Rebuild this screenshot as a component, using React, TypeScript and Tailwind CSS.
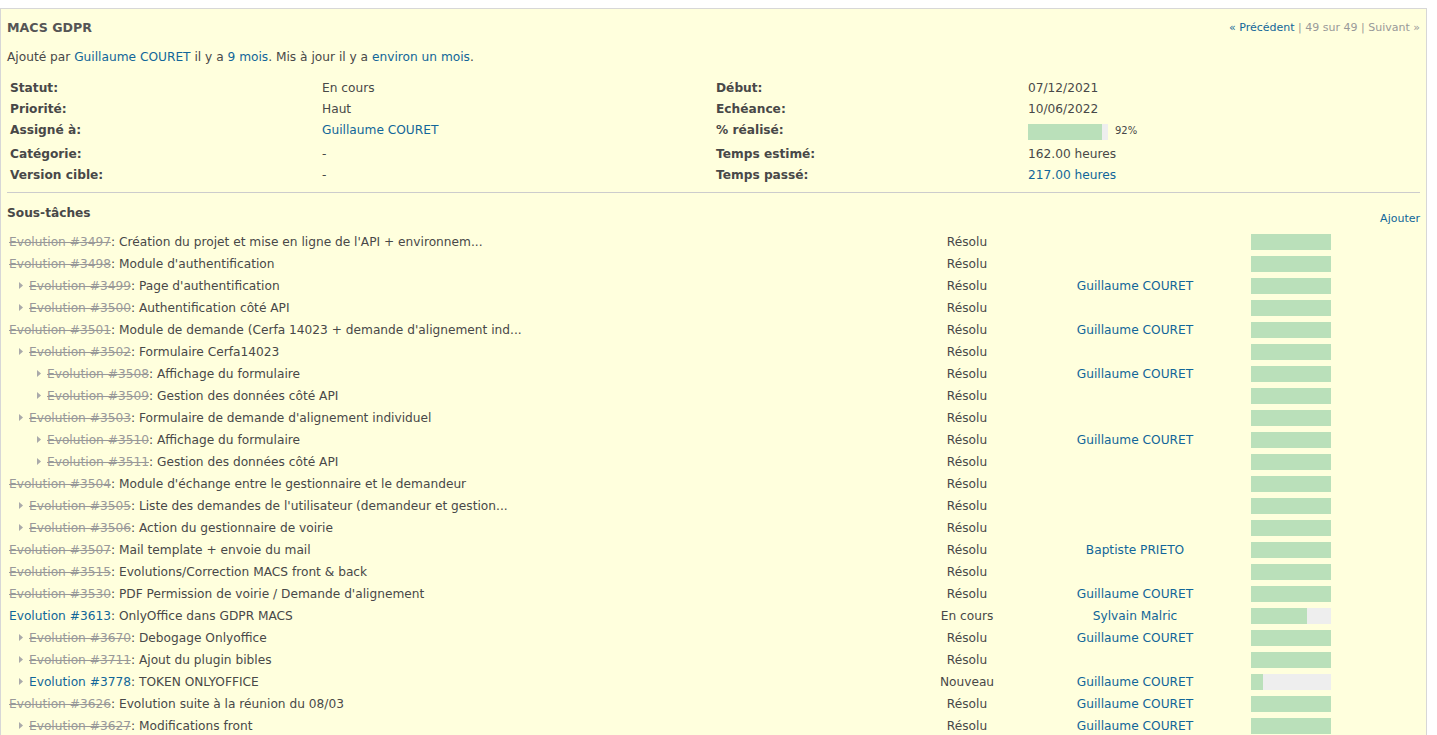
import React from "react";

type Row = {
  level: number;
  id: number;
  title: string;
  closed: boolean;
  status: string;
  assignee?: string;
  done: number;
};

const rows: Row[] = [
  { level: 0, id: 3497, title: "Création du projet et mise en ligne de l'API + environnem...", closed: true, status: "Résolu", done: 100 },
  { level: 0, id: 3498, title: "Module d'authentification", closed: true, status: "Résolu", done: 100 },
  { level: 1, id: 3499, title: "Page d'authentification", closed: true, status: "Résolu", assignee: "Guillaume COURET", done: 100 },
  { level: 1, id: 3500, title: "Authentification côté API", closed: true, status: "Résolu", done: 100 },
  { level: 0, id: 3501, title: "Module de demande (Cerfa 14023 + demande d'alignement ind...", closed: true, status: "Résolu", assignee: "Guillaume COURET", done: 100 },
  { level: 1, id: 3502, title: "Formulaire Cerfa14023", closed: true, status: "Résolu", done: 100 },
  { level: 2, id: 3508, title: "Affichage du formulaire", closed: true, status: "Résolu", assignee: "Guillaume COURET", done: 100 },
  { level: 2, id: 3509, title: "Gestion des données côté API", closed: true, status: "Résolu", done: 100 },
  { level: 1, id: 3503, title: "Formulaire de demande d'alignement individuel", closed: true, status: "Résolu", done: 100 },
  { level: 2, id: 3510, title: "Affichage du formulaire", closed: true, status: "Résolu", assignee: "Guillaume COURET", done: 100 },
  { level: 2, id: 3511, title: "Gestion des données côté API", closed: true, status: "Résolu", done: 100 },
  { level: 0, id: 3504, title: "Module d'échange entre le gestionnaire et le demandeur", closed: true, status: "Résolu", done: 100 },
  { level: 1, id: 3505, title: "Liste des demandes de l'utilisateur (demandeur et gestion...", closed: true, status: "Résolu", done: 100 },
  { level: 1, id: 3506, title: "Action du gestionnaire de voirie", closed: true, status: "Résolu", done: 100 },
  { level: 0, id: 3507, title: "Mail template + envoie du mail", closed: true, status: "Résolu", assignee: "Baptiste PRIETO", done: 100 },
  { level: 0, id: 3515, title: "Evolutions/Correction MACS front & back", closed: true, status: "Résolu", done: 100 },
  { level: 0, id: 3530, title: "PDF Permission de voirie / Demande d'alignement", closed: true, status: "Résolu", assignee: "Guillaume COURET", done: 100 },
  { level: 0, id: 3613, title: "OnlyOffice dans GDPR MACS", closed: false, status: "En cours", assignee: "Sylvain Malric", done: 70 },
  { level: 1, id: 3670, title: "Debogage Onlyoffice", closed: true, status: "Résolu", assignee: "Guillaume COURET", done: 100 },
  { level: 1, id: 3711, title: "Ajout du plugin bibles", closed: true, status: "Résolu", done: 100 },
  { level: 1, id: 3778, title: "TOKEN ONLYOFFICE", closed: false, status: "Nouveau", assignee: "Guillaume COURET", done: 15 },
  { level: 0, id: 3626, title: "Evolution suite à la réunion du 08/03", closed: true, status: "Résolu", assignee: "Guillaume COURET", done: 100 },
  { level: 1, id: 3627, title: "Modifications front", closed: true, status: "Résolu", assignee: "Guillaume COURET", done: 100 },
];

function Arrow() {
  return (
    <svg width="4" height="7" viewBox="0 0 4 7" className="mr-[6px] shrink-0">
      <path d="M0 0 L4 3.5 L0 7 Z" fill="#aaaaaa" />
    </svg>
  );
}

function Bar({ pct }: { pct: number }) {
  return (
    <div className="flex h-4 w-20 bg-[#eeeeee]">
      <div className="h-4 bg-[#bae0ba]" style={{ width: `${pct}%` }} />
    </div>
  );
}

export default function App() {
  return (
    <div className="min-h-screen bg-white pt-2 text-[12.2px] text-[#484848] font-['DejaVu_Sans','Verdana',sans-serif]">
      <div className="w-[1427px] border border-[#d7d7d7] bg-[#ffffdd] px-[6px] pt-[10px]">
        <div className="flex items-start justify-between">
          <h3 className="text-[12.6px] font-bold leading-[18px] text-[#555555]">MACS GDPR</h3>
          <div className="mt-[1px] text-[11px] leading-[16px] text-[#999999]">
            <span className="text-[#116699]">« Précédent</span> | 49 sur 49 | Suivant »
          </div>
        </div>
        <p className="mt-[12px] leading-[16px]">
          Ajouté par <span className="text-[#116699]">Guillaume COURET</span> il y a{" "}
          <span className="text-[#116699]">9 mois</span>. Mis à jour il y a{" "}
          <span className="text-[#116699]">environ un mois</span>.
        </p>

        <div className="mt-[13px] grid grid-cols-[312px_394px_312px_1fr] pl-[3px] leading-[16px]">
          <div className="h-[21px] pt-[2px] font-bold">Statut:</div>
          <div className="h-[21px] pt-[2px]">En cours</div>
          <div className="h-[21px] pt-[2px] font-bold">Début:</div>
          <div className="h-[21px] pt-[2px]">07/12/2021</div>

          <div className="h-[21px] pt-[2px] font-bold">Priorité:</div>
          <div className="h-[21px] pt-[2px]">Haut</div>
          <div className="h-[21px] pt-[2px] font-bold">Echéance:</div>
          <div className="h-[21px] pt-[2px]">10/06/2022</div>

          <div className="h-[24px] pt-[2px] font-bold">Assigné à:</div>
          <div className="h-[24px] pt-[2px] text-[#116699]">Guillaume COURET</div>
          <div className="h-[24px] pt-[2px] font-bold">% réalisé:</div>
          <div className="flex h-[24px] items-start gap-[7px] pt-[4px]">
            <Bar pct={92} />
            <span className="text-[10px] leading-[14px]">92%</span>
          </div>

          <div className="h-[21px] pt-[2px] font-bold">Catégorie:</div>
          <div className="h-[21px] pt-[2px]">-</div>
          <div className="h-[21px] pt-[2px] font-bold">Temps estimé:</div>
          <div className="h-[21px] pt-[2px]">162.00 heures</div>

          <div className="h-[21px] pt-[2px] font-bold">Version cible:</div>
          <div className="h-[21px] pt-[2px]">-</div>
          <div className="h-[21px] pt-[2px] font-bold">Temps passé:</div>
          <div className="h-[21px] pt-[2px] text-[#116699]">217.00 heures</div>
        </div>

        <hr className="mt-[6px] border-0 border-t border-[#cccccc]" />

        <div className="mt-[12px] flex items-start justify-between">
          <div className="font-bold leading-[16px]">Sous-tâches</div>
          <div className="mt-[7px] text-[11px] leading-[14px] text-[#116699]">Ajouter</div>
        </div>

        <div className="mt-[5px]">
          {rows.map((r) => (
            <div key={r.id} className="grid h-[22px] grid-cols-[900px_120px_216px_1fr] items-center">
              <div
                className="flex items-center whitespace-nowrap"
                style={{ paddingLeft: r.level > 0 ? 12 + (r.level - 1) * 18 : 2 }}
              >
                {r.level > 0 && <Arrow />}
                <span className={r.closed ? "text-[#999999] line-through" : "text-[#116699]"}>
                  Evolution #{r.id}
                </span>
                <span>: {r.title}</span>
              </div>
              <div className="text-center">{r.status}</div>
              <div className="text-center text-[#116699]">{r.assignee ?? ""}</div>
              <div className="pl-[8px]">
                <Bar pct={r.done} />
              </div>
            </div>
          ))}
        </div>
      </div>
    </div>
  );
}
